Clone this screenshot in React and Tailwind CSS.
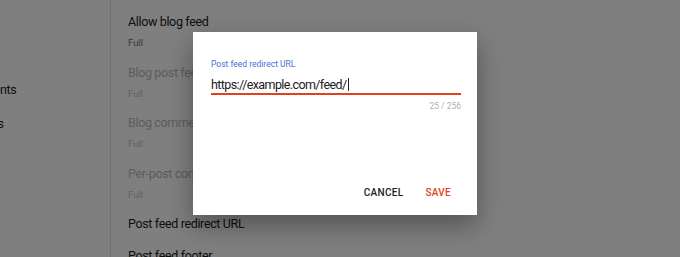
import React from "react";

const navItems = ["Posts", "Stats", "Comments", "Earnings", "Pages", "Layout", "Theme"];

const settings = [
  { title: "Allow blog feed", value: "Full", disabled: false },
  { title: "Blog post feed", value: "Full", disabled: true },
  { title: "Blog comment feed", value: "Full", disabled: true },
  { title: "Per-post comment feed", value: "Full", disabled: true },
  { title: "Post feed redirect URL", value: null, disabled: false },
  { title: "Post feed footer", value: null, disabled: false },
];

function SettingRow({ title, value, disabled }) {
  return (
    <div className="flex flex-col pb-[11.5px]">
      <div
        className={`h-5 whitespace-nowrap text-[12.5px] leading-5 tracking-[-0.35px] ${
          disabled ? "text-[#b8b8b8]" : "text-[#212121]"
        }`}
      >
        {title}
      </div>
      {value && (
        <div
          className={`mt-[3px] h-4 text-[9.5px] leading-4 ${
            disabled ? "text-[#c4c4c4]" : "text-[#6f6f6f]"
          }`}
        >
          {value}
        </div>
      )}
    </div>
  );
}

export default function App() {
  const url = "https://example.com/feed/";

  return (
    <div
      className="relative flex h-[257px] w-[680px] overflow-hidden bg-white"
      style={{ fontFamily: "Roboto, 'Liberation Sans', sans-serif" }}
    >
      {/* Sidebar */}
      <div className="w-[111px] shrink-0 border-r border-[#e0e0e0] pt-[12px]">
        {navItems.map((item) => (
          <div
            key={item}
            className="ml-[-42px] h-[34px] whitespace-nowrap text-[12.5px] leading-5 tracking-[-0.35px] text-[#212121]"
          >
            {item}
          </div>
        ))}
      </div>

      {/* Settings list */}
      <div className="flex-1 pl-[17px] pt-[12px]">
        {settings.map((s) => (
          <SettingRow key={s.title} {...s} />
        ))}
      </div>

      {/* Scrim */}
      <div className="absolute inset-0 bg-black/50" />

      {/* Dialog */}
      <div className="absolute left-[193px] top-[32px] flex h-[183px] w-[284px] flex-col bg-white shadow-[0_10px_24px_rgba(0,0,0,0.35)]">
        <div className="px-[18px] pt-[27px]">
          <div className="text-[8.5px] leading-[11px] text-[#4a6fd6]">
            Post feed redirect URL
          </div>
          <div className="mr-[-2px] mt-[7px] flex h-[18px] items-center border-b-2 border-[#e2411f] pb-[1px] text-[12.5px] leading-4 tracking-[-0.6px] text-[#212121]">
            <span>{url}</span>
            <span className="ml-[1px] inline-block h-[13px] w-px bg-[#212121]" />
          </div>
          <div className="mr-[-2px] mt-[6px] text-right text-[8.5px] leading-[11px] text-[#b0b0b0]">
            {url.length} / 256
          </div>
        </div>
        <div className="mt-auto flex items-center justify-end gap-[6px] pb-[12px] pr-[18px]">
          <button className="px-[8px] py-[4px] text-[10px] font-medium leading-3 tracking-[0.3px] text-[#212121]">
            CANCEL
          </button>
          <button className="px-[8px] py-[4px] text-[10px] font-medium leading-3 tracking-[0.3px] text-[#e2411f]">
            SAVE
          </button>
        </div>
      </div>
    </div>
  );
}
